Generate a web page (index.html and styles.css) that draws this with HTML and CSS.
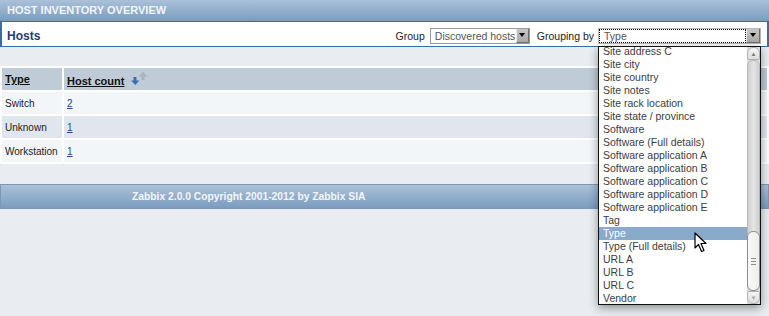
FILE: index.html
```html
<!DOCTYPE html>
<html lang="en">
<head>
  <meta charset="UTF-8">
  <title>Host inventory overview</title>
  <meta name="viewport" content="width=device-width, initial-scale=1.0">

  <link rel="stylesheet" href="styles.css">
</head>

<body>

<div class="page-title">HOST INVENTORY OVERVIEW</div>

<!-- =========================
FILTER HEADER
========================== -->
<div class="filter-box">
  <span class="box-title">Hosts</span>

  <div class="filter-controls">
    <span class="label">Group</span>
    <div class="select select-group">
      <span class="select-value">Discovered hosts</span>
      <span class="select-btn"><i class="tri"></i></span>
    </div>

    <span class="label label-grouping">Grouping by</span>
    <div class="select select-grouping">
      <span class="select-value focused">Type</span>
      <span class="select-btn"><i class="tri"></i></span>
    </div>
  </div>
</div>

<!-- =========================
INVENTORY TABLE
========================== -->
<table class="inventory">
  <tr>
    <th class="col-type"><a href="#">Type</a></th>
    <th>
      <a href="#">Host count</a>
      <svg class="sort-icon" width="18" height="14" viewBox="0 0 18 14">
        <rect x="3.5" y="5" width="3" height="4" fill="#3f6db5"/>
        <polygon points="1,8.5 9.5,8.5 5.25,13" fill="#3f6db5"/>
        <rect x="11.5" y="4" width="3" height="4" fill="#aab2ba"/>
        <polygon points="8.5,4.5 17.5,4.5 13,0" fill="#aab2ba"/>
      </svg>
    </th>
  </tr>
  <tr class="odd">
    <td>Switch</td>
    <td><a href="#">2</a></td>
  </tr>
  <tr class="even">
    <td>Unknown</td>
    <td><a href="#">1</a></td>
  </tr>
  <tr class="odd">
    <td>Workstation</td>
    <td><a href="#">1</a></td>
  </tr>
</table>

<div class="footer">Zabbix 2.0.0 Copyright 2001-2012 by Zabbix SIA</div>

<!-- open list of the "Grouping by" select -->
<div class="dropdown">
  <ul class="options">
    <li>Site address C</li>
    <li>Site city</li>
    <li>Site country</li>
    <li>Site notes</li>
    <li>Site rack location</li>
    <li>Site state / province</li>
    <li>Software</li>
    <li>Software (Full details)</li>
    <li>Software application A</li>
    <li>Software application B</li>
    <li>Software application C</li>
    <li>Software application D</li>
    <li>Software application E</li>
    <li>Tag</li>
    <li class="selected">Type</li>
    <li>Type (Full details)</li>
    <li>URL A</li>
    <li>URL B</li>
    <li>URL C</li>
    <li>Vendor</li>
  </ul>

  <div class="scrollbar">
    <div class="sb-btn sb-up">&#9650;</div>
    <div class="sb-track">
      <div class="sb-space"></div>
      <div class="sb-thumb">
        <svg width="5" height="7" viewBox="0 0 5 7">
          <rect x="0" y="0" width="5" height="1" fill="#8c8c8c"/>
          <rect x="0" y="3" width="5" height="1" fill="#8c8c8c"/>
          <rect x="0" y="6" width="5" height="1" fill="#8c8c8c"/>
        </svg>
      </div>
    </div>
    <div class="sb-btn sb-down">&#9660;</div>
  </div>
</div>

<!-- mouse pointer over the list -->
<svg class="cursor" width="14" height="21" viewBox="0 0 14 21">
  <path d="M1 1 L1 16 L4.5 12.5 L7.5 19.5 L10 18.5 L7 11.5 L12 11.5 Z" fill="#fff" stroke="#000" stroke-width="1.2" stroke-linejoin="round"/>
</svg>

</body>
</html>
```

FILE: styles.css
```css
html, body {
  min-height: 316px;
}

body {
  margin: 0;
  background: #e9edf1;
  font-family: "Liberation Sans", Arial, sans-serif;
  font-size: 10.5px;
  color: #222;
}

.page-title {
  height: 21px;
  line-height: 21px;
  padding-left: 7px;
  background: linear-gradient(#aac1d8, #7b9cc0);
  color: #f2f5f8;
  font-size: 11px;
  font-weight: bold;
}

/* =========================
FILTER HEADER
========================== */
.filter-box {
  box-sizing: border-box;
  display: flex;
  align-items: center;
  justify-content: space-between;
  height: 26px;
  padding: 3px 6px 0 5px;
  background: #fff;
  border: 1px solid #3a6da3;
  border-width: 1px 2px;
}

.box-title {
  font-size: 12px;
  font-weight: bold;
  color: #1f3b73;
}

.filter-controls {
  display: flex;
  align-items: center;
}

.label {
  margin-right: 5px;
  color: #222;
}

.label-grouping {
  margin-left: 7px;
  margin-right: 4px;
}

.select {
  box-sizing: border-box;
  display: flex;
  height: 16px;
  border: 1px solid #9a9a9a;
  background: #fff;
}

.select-group { width: 100px; }
.select-grouping { width: 163px; border-color: #b8b8b8; }

.select-value {
  flex: 1;
  padding-left: 4px;
  line-height: 14px;
  color: #555;
}

.select-value.focused {
  outline: 1px dotted #000;
  outline-offset: -1px;
  padding-left: 5px;
}

.select-btn {
  display: flex;
  align-items: center;
  justify-content: center;
  width: 11px;
  background: linear-gradient(#c6c6c6, #a9a9a9);
  border-left: 1px solid #eee;
  border-right: 1px solid #6f6f6f;
  border-bottom: 1px solid #6f6f6f;
}

.select-grouping .select-btn { width: 12px; }

.tri {
  width: 0;
  height: 0;
  border-left: 3.5px solid transparent;
  border-right: 3.5px solid transparent;
  border-top: 4px solid #000;
}

/* =========================
OPEN LIST
========================== */
.dropdown {
  position: absolute;
  top: 46px;
  left: 598px;
  box-sizing: border-box;
  width: 163px;
  height: 259px;
  display: flex;
  overflow: hidden;
  background: #fff;
  border: 1px solid #111;
  box-shadow: 0 3px 9px rgba(0, 0, 0, 0.4);
  z-index: 5;
}

.options {
  flex: 1;
  list-style: none;
  margin: -2px 0 0 0;
  padding: 0;
}

.options li {
  height: 13px;
  line-height: 13px;
  padding-left: 4px;
  color: #3c3c3c;
  white-space: nowrap;
}

.options li.selected {
  background: #8aaacb;
  color: #fff;
}

.scrollbar {
  width: 13px;
  display: flex;
  flex-direction: column;
  background: #dcdcdc;
}

.sb-btn {
  height: 13px;
  line-height: 13px;
  text-align: center;
  font-size: 6px;
  color: #777;
  background: linear-gradient(#f4f4f4, #dedede);
  border: 1px solid #b0b0b0;
  box-sizing: border-box;
}

.sb-up { border-radius: 6px 6px 2px 2px; }
.sb-down { border-radius: 2px 2px 6px 6px; color: #aaa; }

.sb-track {
  flex: 1;
  display: flex;
  flex-direction: column;
  background: linear-gradient(90deg, #cfcfcf, #e4e4e4, #cfcfcf);
  border-radius: 6px;
  border: 1px solid #b8b8b8;
}

.sb-space { flex: 1; }

.sb-thumb {
  height: 58px;
  display: flex;
  align-items: center;
  justify-content: center;
  background: linear-gradient(90deg, #fafafa, #ededed);
  border: 1px solid #8f8f8f;
  border-radius: 6px;
  margin: 0 -1px -1px;
}

/* =========================
TABLE
========================== */
.inventory {
  width: 100%;
  margin-top: 19px;
  border-spacing: 2px;
  background: #fff;
}

.inventory th,
.inventory td {
  height: 22px;
  padding: 0 3px;
  text-align: left;
  vertical-align: middle;
}

.inventory td {
  font-size: 10px;
}

.inventory th {
  background: #bfcbd6;
  font-size: 11px;
  font-weight: bold;
}

.inventory th a {
  color: #111;
}

.col-type { width: 54px; }

.sort-icon {
  vertical-align: -1px;
  margin-left: 2px;
}

.inventory tr.odd td { background: #f2f6f9; }
.inventory tr.even td { background: #e1e6ee; }

.inventory td a {
  color: #263f9c;
}

.footer {
  box-sizing: border-box;
  height: 25px;
  margin-top: 20px;
  padding-left: 131px;
  line-height: 23px;
  background: linear-gradient(#aac1d8, #7b9cc0);
  border: 1px solid #7b98b6;
  color: #f4f6f9;
  font-size: 10.3px;
  font-weight: bold;
}

.cursor {
  position: absolute;
  left: 694px;
  top: 232px;
  z-index: 10;
}
```
